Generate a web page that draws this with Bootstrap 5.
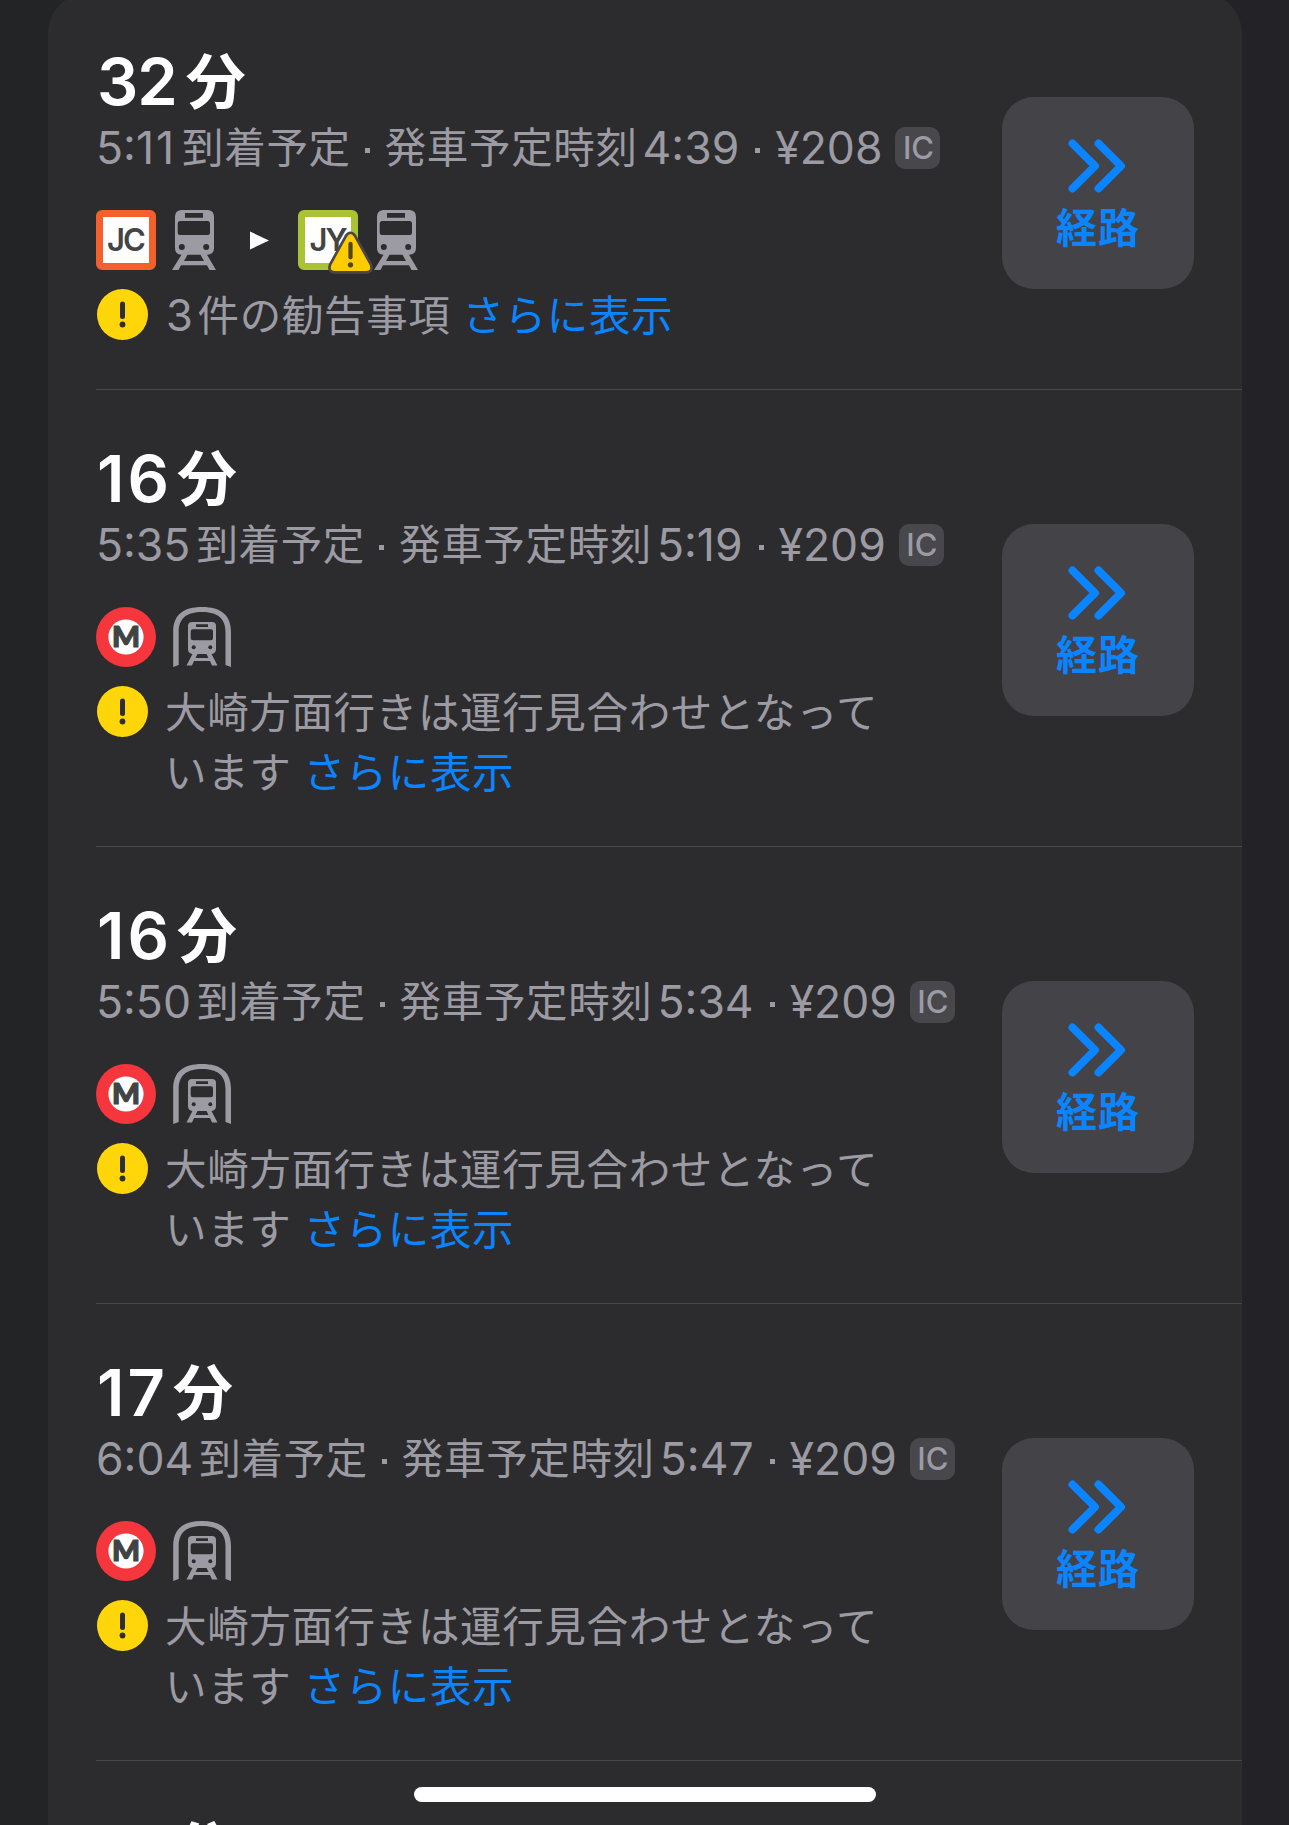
<!DOCTYPE html>
<html lang="ja" data-bs-theme="dark">
<head>
<meta charset="utf-8">
<meta name="viewport" content="width=device-width, initial-scale=1">
<title>経路</title>
<link href="https://cdn.jsdelivr.net/npm/bootstrap@5.3.0/dist/css/bootstrap.min.css" rel="stylesheet">
<style>
body{height:1825px;background:linear-gradient(90deg,#222426 0,#232426 50%,#222227 100%);font-family:Inter,"Noto Sans CJK JP",sans-serif;color:#9c9ba3}
.sheet{width:1194px;height:1832px;margin:-7px 0 0 48px;background:#2c2c2e;border-radius:40px 40px 0 0}
.trip{margin-left:48px;padding:49px 48px 43px 0;border-bottom:1px solid #48484b}
.trip-title{height:77px;line-height:79px;font-size:65px;font-weight:600;color:#fff;margin:0;padding-left:1px;letter-spacing:-1px;white-space:nowrap}
.trip-title .one{letter-spacing:3px}
.trip-title .unit{display:inline-block;line-height:72px;height:77px;vertical-align:top;font-family:"Noto Sans CJK JP",sans-serif;font-size:60px;font-weight:700;margin-left:9px}
.trip-sub{height:58px;line-height:58px;font-size:44.5px;white-space:nowrap}
.trip-sub .one{letter-spacing:2px}
.ja{font-family:"Noto Sans CJK JP",sans-serif;font-size:41.5px;letter-spacing:.65px}
.trip-sub .ja{padding-bottom:6px}
.trip-sub .arr{margin-left:6px}
.trip-sub .dep{margin-left:5px}
.dot{width:5px;height:5px;background:currentColor;margin:5px 15px 0 16px}
.ja+.dot{margin:5px 15px 0 14px}
.ic{width:45px;height:42px;border-radius:10px;background:#48474c;font-size:31px;font-weight:500;line-height:42px;margin-left:13px;padding-left:1px}
.legs{height:60px;margin-top:33px}
.line-badge{width:60px;height:60px;border-radius:6px;border:7px solid #f4602c;background:#fff;color:#444;font-size:31px;font-weight:600;letter-spacing:-2px;padding:1px 1px 0 0}
.line-badge.jy{border-color:#a9c332}
.warn{position:absolute;left:29px;top:19px}
.alert-row{margin-top:16px}
.alert-row>svg{margin:3px 0 0 1px}
.alert-copy{margin-left:17px}
.alert-copy p{margin:0;height:60px;line-height:54px;white-space:nowrap}
.alert-copy a{margin-left:12px;color:#0a84ff;text-decoration:none}
.n3{font-family:Inter,sans-serif;font-size:43.5px;line-height:58px;margin-left:1px}
.go{width:192px;height:192px;border:0;border-radius:32px;background:#444347;color:#0a84ff;margin-bottom:3px;gap:8px;padding:3px 0 0}
.go svg{margin-right:3px}
.go span{font-family:"Noto Sans CJK JP",sans-serif;font-weight:700;font-size:41px;line-height:48px;letter-spacing:1px}
.home-bar{left:414px;top:1787px;width:462px;height:15px;background:#fff;border-radius:8px}
</style>
<script src="https://cdn.jsdelivr.net/npm/bootstrap@5.3.0/dist/js/bootstrap.bundle.min.js"></script>
</head>
<body class="overflow-hidden position-relative">
<svg width="0" height="0" class="position-absolute">
<defs>
<symbol id="train" viewBox="92 20 44 60"><path fill="#9c9ba3" fill-rule="evenodd" d="M101 20H128Q134 20.500 134 27V58Q134 64.500 127 64.700L136 80H129.500L127 75.200H101L98.500 80H92L101.500 64.700Q95 64.500 95 58V27Q95 20.500 101 20ZM105 23V27.700H123V23ZM100 31Q97.700 31 97.700 33.500V42.500Q97.700 45 100 45H128Q130 45 130 42.500V33.500Q130 31 128 31ZM107.500 64.700L104 71H124L120.500 64.700Z"/><circle cx="101.800" cy="57" r="3" fill="#2c2c2e"/><circle cx="126.200" cy="57" r="3" fill="#2c2c2e"/></symbol>
<symbol id="metro" viewBox="93 17 58 60"><path fill="#9c9ba3" d="M93.200 77V42C93.200 25 103 17 122 17S151 25 151 42V77L145.500 75V42C145.500 28 137 22 122 22S98.700 28 98.700 42V75Z"/><path fill="#9c9ba3" fill-rule="evenodd" d="M112 32H132Q136 32 136 36V59Q136 63.500 131.500 64L137.500 75.500H132L130 71H114L112 75.500H106.500L112.500 64Q108 63.500 108 59V36Q108 32 112 32ZM116 34.300V37H128V34.300ZM113 39.300Q110.700 39.300 110.700 41.500V48Q110.700 50.300 113 50.300H131Q133 50.300 133 48V41.500Q133 39.300 131 39.300ZM117.500 64L115.500 68H128.500L126.500 64Z"/><circle cx="113.700" cy="57.200" r="2" fill="#2c2c2e"/><circle cx="130.300" cy="57.200" r="2" fill="#2c2c2e"/></symbol>
<symbol id="m-badge" viewBox="0 0 60 60"><circle cx="30" cy="30" r="30" fill="#f5363c"/><circle cx="30" cy="30" r="17.600" fill="#fff"/><text x="30" y="40" text-anchor="middle" font-family="Lato,sans-serif" font-weight="900" font-size="28" textLength="28" lengthAdjust="spacingAndGlyphs" fill="#414444" stroke="#414444" stroke-width="1.200">M</text></symbol>
<symbol id="notice" viewBox="0 0 51 51"><circle cx="25.500" cy="25.500" r="25.500" fill="#ffd60a"/><path d="M25.500 15V27.500" stroke="#2f2e28" stroke-width="5" stroke-linecap="round"/><circle cx="25.500" cy="35.500" r="2.900" fill="#2f2e28"/></symbol>
<symbol id="chevrons" viewBox="0 0 58 54"><path d="M4.500 4.500L27 27L4.500 49.500M30.500 4.500L53 27L30.500 49.500" fill="none" stroke="#0a84ff" stroke-width="8" stroke-linecap="round" stroke-linejoin="round"/></symbol>
</defs>
</svg>
<main class="sheet">
<section class="trip d-flex justify-content-between align-items-center">
<div>
<h2 class="trip-title">32<span class="unit">分</span></h2>
<div class="trip-sub d-flex align-items-center"><span>5:<span class="one">11</span></span><span class="ja arr">到着予定</span><i class="dot"></i><span class="ja">発車予定時刻</span><span class="dep">4:39</span><i class="dot"></i>¥208<span class="ic text-center">IC</span></div>
<div class="legs d-flex align-items-center">
<span class="line-badge d-flex align-items-center justify-content-center">JC</span>
<svg width="44" height="60" style="margin-left:16px"><use href="#train"/></svg>
<svg width="19" height="19" viewBox="0 0 19 19" style="margin-left:34px"><path d="M0 0.500L19 9.500L0 18.500Z" fill="#fff"/></svg>
<span class="position-relative" style="margin-left:29px"><span class="line-badge jy d-flex align-items-center justify-content-center">JY</span>
<svg class="warn" width="47" height="46" viewBox="0 0 44 43"><path d="M22 3.500Q24.500 3.500 26.500 6.800L41 33Q43.500 40 37 40.500H7Q0.500 40 3 33L17.500 6.800Q19.500 3.500 22 3.500Z" fill="#ffcc00" stroke="#4b4745" stroke-width="2.500"/><path d="M22 14V26.500" stroke="#51450f" stroke-width="4" stroke-linecap="round"/><circle cx="22" cy="33.500" r="2.500" fill="#51450f"/></svg></span>
<svg width="44" height="60" style="margin-left:16px"><use href="#train"/></svg>
</div>
<div class="alert-row d-flex align-items-start"><svg width="51" height="51"><use href="#notice"/></svg><div class="alert-copy ja"><p class="d-flex"><span class="n3">3</span><span class="ms-1">件の勧告事項</span><a href="#">さらに表示</a></p></div></div>
</div>
<button class="go d-flex flex-column align-items-center justify-content-center"><svg width="58" height="54"><use href="#chevrons"/></svg><span>経路</span></button>
</section>
<section class="trip d-flex justify-content-between align-items-center">
<div>
<h2 class="trip-title"><span class="one">1</span>6<span class="unit">分</span></h2>
<div class="trip-sub d-flex align-items-center">5:35<span class="ja arr">到着予定</span><i class="dot"></i><span class="ja">発車予定時刻</span><span class="dep">5:19</span><i class="dot"></i>¥209<span class="ic text-center">IC</span></div>
<div class="legs d-flex"><svg width="60" height="60"><use href="#m-badge"/></svg><svg width="58" height="60" style="margin-left:17px"><use href="#metro"/></svg></div>
<div class="alert-row d-flex align-items-start"><svg width="51" height="51"><use href="#notice"/></svg><div class="alert-copy ja"><p>大崎方面行きは運行見合わせとなって</p><p>います<a href="#">さらに表示</a></p></div></div>
</div>
<button class="go d-flex flex-column align-items-center justify-content-center"><svg width="58" height="54"><use href="#chevrons"/></svg><span>経路</span></button>
</section>
<section class="trip d-flex justify-content-between align-items-center">
<div>
<h2 class="trip-title"><span class="one">1</span>6<span class="unit">分</span></h2>
<div class="trip-sub d-flex align-items-center">5:50<span class="ja arr">到着予定</span><i class="dot"></i><span class="ja">発車予定時刻</span><span class="dep">5:34</span><i class="dot"></i>¥209<span class="ic text-center">IC</span></div>
<div class="legs d-flex"><svg width="60" height="60"><use href="#m-badge"/></svg><svg width="58" height="60" style="margin-left:17px"><use href="#metro"/></svg></div>
<div class="alert-row d-flex align-items-start"><svg width="51" height="51"><use href="#notice"/></svg><div class="alert-copy ja"><p>大崎方面行きは運行見合わせとなって</p><p>います<a href="#">さらに表示</a></p></div></div>
</div>
<button class="go d-flex flex-column align-items-center justify-content-center"><svg width="58" height="54"><use href="#chevrons"/></svg><span>経路</span></button>
</section>
<section class="trip d-flex justify-content-between align-items-center">
<div>
<h2 class="trip-title"><span class="one">1</span>7<span class="unit">分</span></h2>
<div class="trip-sub d-flex align-items-center">6:04<span class="ja arr">到着予定</span><i class="dot"></i><span class="ja">発車予定時刻</span><span class="dep">5:47</span><i class="dot"></i>¥209<span class="ic text-center">IC</span></div>
<div class="legs d-flex"><svg width="60" height="60"><use href="#m-badge"/></svg><svg width="58" height="60" style="margin-left:17px"><use href="#metro"/></svg></div>
<div class="alert-row d-flex align-items-start"><svg width="51" height="51"><use href="#notice"/></svg><div class="alert-copy ja"><p>大崎方面行きは運行見合わせとなって</p><p>います<a href="#">さらに表示</a></p></div></div>
</div>
<button class="go d-flex flex-column align-items-center justify-content-center"><svg width="58" height="54"><use href="#chevrons"/></svg><span>経路</span></button>
</section>
<section class="trip border-0 pb-0"><h2 class="trip-title"><span class="one">1</span>7<span class="unit">分</span></h2></section>
</main>
<div class="home-bar position-absolute"></div>
</body>
</html>
